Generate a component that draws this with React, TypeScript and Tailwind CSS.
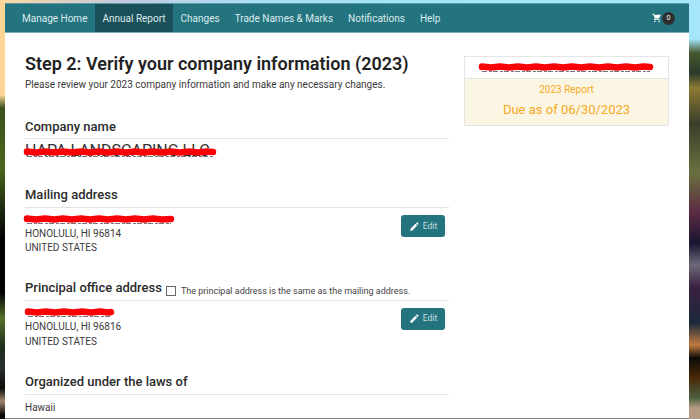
import React from 'react'

const navItems = ['Manage Home', 'Annual Report', 'Changes', 'Trade Names & Marks', 'Notifications', 'Help']

// hand-drawn red marker over the blanked out values
const Scribble: React.FunctionComponent<{width: number, height?: number}> = ({width, height = 8}) => {
	const mid = height / 2 + 1
	let zigzag = `M4 ${mid}`
	for (let x = 4, i = 0; x < width - 4; x += 9, i++) {
		zigzag += ` L${x} ${mid + (i % 2 ? 0.5 : -0.5)}`
	}
	zigzag += ` L${width - 4} ${mid}`
	return (
		<svg className="absolute left-0 top-0" width={width} height={height + 2} viewBox={`0 0 ${width} ${height + 2}`} aria-hidden="true">
			<path d={`M4 ${height + 1.5} L${width - 4} ${height + 1.5}`} fill="none" stroke="#777777" strokeWidth="1" strokeDasharray="5 2 3 1" />
			<path d={zigzag} fill="none" stroke="#fb0007" strokeWidth="6.5" strokeLinecap="round" strokeLinejoin="round" />
		</svg>
	)
}

const EditButton = () => (
	<button className="flex h-[22px] w-11 items-center justify-center gap-[3px] rounded-[3px] bg-[#24747f] text-[8.5px] text-[#c9dfe2]">
		<svg width="11" height="11" viewBox="0 0 24 24" fill="#ffffff" aria-hidden="true">
			<path d="M3 17.25V21h3.75L17.81 9.94l-3.75-3.75L3 17.25zM20.71 7.04a1 1 0 0 0 0-1.41l-2.34-2.34a1 1 0 0 0-1.41 0l-1.83 1.83 3.75 3.75 1.83-1.83z" />
		</svg>
		Edit
	</button>
)

const Heading: React.FunctionComponent<{children: React.ReactNode}> = ({children}) => (
	<div className="border-b border-[#e3e3e3] text-[13px] leading-[18px] font-medium text-[#2b2b2b]">{children}</div>
)

export default function App() {
	return (
		<div className="flex h-[419px] w-[700px] flex-col overflow-hidden bg-[linear-gradient(90deg,#fcd9a0_0px,#c3c9e0_120px,#a5e2f8_280px,#a5e6fb_700px)] font-['Roboto',sans-serif]">
			<div className="h-[3px] shrink-0" />
			<div className="flex min-h-0 flex-1">
				<div className="w-[5px] shrink-0 bg-[linear-gradient(180deg,#fdd596_0px,#fdd596_92px,#38501a_105px,#4a661d_165px,#1e2a10_205px,#020204_235px,#020204_290px,#57702a_315px,#1c2c1c_345px,#2a2f32_365px,#0a0a08_385px,#a08570_398px,#0a0a08_412px)]" />
				<main className="flex min-w-0 flex-1 flex-col border-b border-[#808080] bg-white">
					<nav className="flex h-[30px] shrink-0 items-center rounded-t-[1px] border-y border-t-[#5c9aa3] border-b-[#7fb0b7] bg-[#24747f] pl-[9.5px] pr-[14px] text-[10px] text-[#dcebed]">
						{navItems.map((item) => (
							<a
								key={item}
								className={item === 'Annual Report' ? 'flex h-full items-center bg-[#1a5059] px-[7.5px]' : 'flex h-full items-center px-[7.5px]'}
							>
								{item}
							</a>
						))}
						<div className="ml-auto flex items-center">
							<svg width="10" height="10" viewBox="0 0 24 24" fill="#ffffff" aria-hidden="true">
								<path d="M7 18a2 2 0 1 0 0 4 2 2 0 0 0 0-4zM1 2v2h2l3.6 7.59-1.35 2.45A2 2 0 0 0 7 17h12v-2H7.42a.25.25 0 0 1-.25-.25l.03-.12L8.1 13h7.45c.75 0 1.41-.41 1.75-1.03L20.88 5.5A1 1 0 0 0 20 4H5.21l-.94-2H1zm16 16a2 2 0 1 0 0 4 2 2 0 0 0 0-4z" />
							</svg>
							<span className="flex h-[13px] w-[13px] items-center justify-center rounded-full bg-[#2e2e2e] text-[7px] text-white">0</span>
						</div>
					</nav>
					<div className="flex min-h-0 flex-1 gap-[15px] overflow-hidden pl-5 pt-[17px]">
						<div className="w-[424px] shrink-0 text-[10px] text-[#3a3a3a]">
							<h1 className="mt-[1px] text-[18px] leading-[26px] font-semibold text-[#222222]">Step 2: Verify your company information (2023)</h1>
							<p className="mt-[1px] text-[10px] leading-[14px]">Please review your 2023 company information and make any necessary changes.</p>

							<div className="mt-[26px]">
								<Heading><div className="pb-[2px]">Company name</div></Heading>
								<div className="relative mt-[5px] h-[14px] w-fit text-[16px] leading-[14px] whitespace-nowrap text-[#333333]">
									HAPA LANDSCAPING LLC
									<div className="absolute left-[-2px] top-[3px]"><Scribble width={194} /></div>
								</div>
							</div>

							<div className="mt-[28px]">
								<Heading><div className="pb-[3px]">Mailing address</div></Heading>
								<div className="mt-[4px] flex items-start justify-between pr-1">
									<div className="text-[10px] leading-[14.5px]">
										<div className="relative h-[14.5px] w-[148px]">
											<div className="absolute left-[-2px] top-[2px]"><Scribble width={152} /></div>
										</div>
										<div>HONOLULU, HI 96814</div>
										<div>UNITED STATES</div>
									</div>
									<div className="mt-[3px]"><EditButton /></div>
								</div>
							</div>

							<div className="mt-[23px]">
								<Heading>
									<div className="flex items-end pb-[3px]">
										Principal office address
										<span className="mb-[1px] ml-[4px] h-[10px] w-[10px] border border-[#666666] bg-white" />
										<span className="ml-[5px] text-[9px] leading-[12px] font-normal text-[#444444]">The principal address is the same as the mailing address.</span>
									</div>
								</Heading>
								<div className="mt-[5px] flex items-start justify-between pr-1">
									<div className="text-[10px] leading-[14.5px]">
										<div className="relative h-[14.5px] w-[90px]">
											<div className="absolute left-[-1px] top-[1px]"><Scribble width={91} /></div>
										</div>
										<div>HONOLULU, HI 96816</div>
										<div>UNITED STATES</div>
									</div>
									<div className="mt-[2px]"><EditButton /></div>
								</div>
							</div>

							<div className="mt-[24px]">
								<Heading><div className="pb-[3px]">Organized under the laws of</div></Heading>
								<div className="mt-[6px] leading-[14px]">Hawaii</div>
							</div>
						</div>

						<aside className="mt-[6px] h-[70px] w-[205px] shrink-0 border border-[#e5e5e5]">
							<div className="relative h-[22px] border-b border-[#e5e5e5]">
								<div className="absolute left-[13px] top-[5px]"><Scribble width={176} /></div>
							</div>
							<div className="flex h-[46px] flex-col items-center bg-[#fbf6e3] text-[#f7a823]">
								<div className="mt-[4px] text-[10px] leading-[14px]">2023 Report</div>
								<div className="mt-[4px] text-[13px] leading-[18px]">Due as of 06/30/2023</div>
							</div>
						</aside>
					</div>
				</main>
				<div className="w-[11px] shrink-0 bg-[linear-gradient(180deg,#a5e6fb_0px,#a5e6fb_36px,#46582f_50px,#2a3a2a_70px,#8d7a34_85px,#3a3f2a_120px,#6a7040_170px,#5c2a44_210px,#1a1530_240px,#6d6878_262px,#3a2040_285px,#1a2a3c_320px,#c07a3f_342px,#0c0a08_355px,#4a2a08_375px,#4c6040_395px,#b59a82_405px)]" />
			</div>
		</div>
	)
}
